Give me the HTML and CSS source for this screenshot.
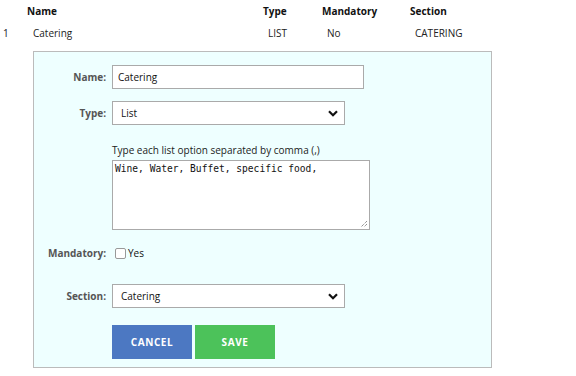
FILE: index.html
```html
<!DOCTYPE html>
<html>
<head>
<meta charset="utf-8">
<link rel="stylesheet" href="styles.css">
</head>
<body>
<div class="table">
  <div class="row head">
    <div></div>
    <div>Name</div>
    <div>Type</div>
    <div>Mandatory</div>
    <div>Section</div>
  </div>
  <div class="row data">
    <div class="idx">1</div>
    <div class="nm">Catering</div>
    <div>LIST</div>
    <div>No</div>
    <div>CATERING</div>
  </div>
</div>
<form class="panel">
  <div class="field f-name">
    <label class="lbl">Name:</label>
    <input class="input" type="text" value="Catering">
  </div>
  <div class="field f-type">
    <label class="lbl">Type:</label>
    <div class="select">
      <span>List</span>
      <svg class="chev" width="10" height="7" viewBox="0 0 10 7"><path d="M1 1.2 L5 5.2 L9 1.2" fill="none" stroke="#111" stroke-width="2.2"/></svg>
    </div>
  </div>
  <div class="field f-help">
    <div></div>
    <div class="help">Type each list option separated by comma (,)</div>
  </div>
  <div class="field f-area">
    <div></div>
    <div class="area">Wine, Water, Buffet, specific food,
      <svg class="grip" width="8" height="8" viewBox="0 0 8 8"><path d="M7 1 L1 7 M7 4 L4 7" stroke="#666" stroke-width="1" stroke-dasharray="1 1"/></svg>
    </div>
  </div>
  <div class="field f-mand">
    <label class="lbl">Mandatory:</label>
    <div class="check"><span class="box"></span><span>Yes</span></div>
  </div>
  <div class="field f-sect">
    <label class="lbl">Section:</label>
    <div class="select">
      <span>Catering</span>
      <svg class="chev" width="10" height="7" viewBox="0 0 10 7"><path d="M1 1.2 L5 5.2 L9 1.2" fill="none" stroke="#111" stroke-width="2.2"/></svg>
    </div>
  </div>
  <div class="field f-btns">
    <div></div>
    <div class="btns">
      <button type="button" class="btn cancel">CANCEL</button>
      <button type="button" class="btn save">SAVE</button>
    </div>
  </div>
</form>
</body>
</html>
```
FILE: styles.css
```css
* { box-sizing: border-box; }
body {
  margin: 0;
  font-family: "Open Sans", "Noto Sans", sans-serif;
  font-size: 10px;
  color: #222;
  background: #fff;
}
.row {
  display: grid;
  grid-template-columns: 27px 236px 59px 88px 1fr;
  height: 22px;
  align-items: center;
}
.head { font-weight: bold; color: #111; }
.data > div { padding-left: 5px; }
.data > .nm { padding-left: 6px; }
.data > .idx { padding-left: 3px; }

.panel {
  margin-left: 33px;
  width: 459px;
  height: 317px;
  margin-top: 7px;
  background: #eeffff;
  border: 1px solid #bbbbbb;
  padding-top: 13px;
}
.field {
  display: grid;
  grid-template-columns: 72px 1fr;
  column-gap: 6px;
  align-items: center;
}
.lbl {
  text-align: right;
  font-weight: bold;
  color: #555;
}
.input {
  width: 252px;
  height: 24px;
  border: 1px solid #aaa;
  background: #fff;
  font: inherit;
  color: #111;
  padding: 0 5px;
  margin: 0;
  outline: none;
}
.select {
  position: relative;
  width: 233px;
  height: 24px;
  border: 1px solid #aaa;
  background: #fff;
  color: #111;
  display: flex;
  align-items: center;
  padding-left: 8px;
}
.chev { position: absolute; right: 6px; top: 8px; }
.f-type { margin-top: 12px; }
.f-help { margin-top: 18px; }
.help { color: #222; }
.f-area { margin-top: 3px; }
.area {
  position: relative;
  width: 258px;
  height: 70px;
  border: 1px solid #aaa;
  background: #fff;
  font-family: "DejaVu Sans Mono", monospace;
  font-size: 9.6px;
  color: #111;
  padding: 2px 2px;
  white-space: pre;
}
.grip { position: absolute; right: 1px; bottom: 1px; }
.f-mand { margin-top: 16px; }
.check { display: flex; align-items: center; gap: 2px; color: #111; }
.box {
  width: 11px;
  height: 11px;
  margin-left: 3px;
  border: 1px solid #999;
  border-radius: 2px;
  background: #fff;
}
.f-sect { margin-top: 24px; }
.f-btns { margin-top: 17px; }
.btns { display: flex; gap: 3px; }
.btn {
  width: 80px;
  height: 34px;
  border: none;
  margin: 0;
  color: #fff;
  font-family: "Open Sans", sans-serif;
  font-weight: bold;
  font-size: 10px;
  letter-spacing: 0.6px;
}
.cancel { background: #4c78c2; }
.save { background: #4cc25a; }
```
